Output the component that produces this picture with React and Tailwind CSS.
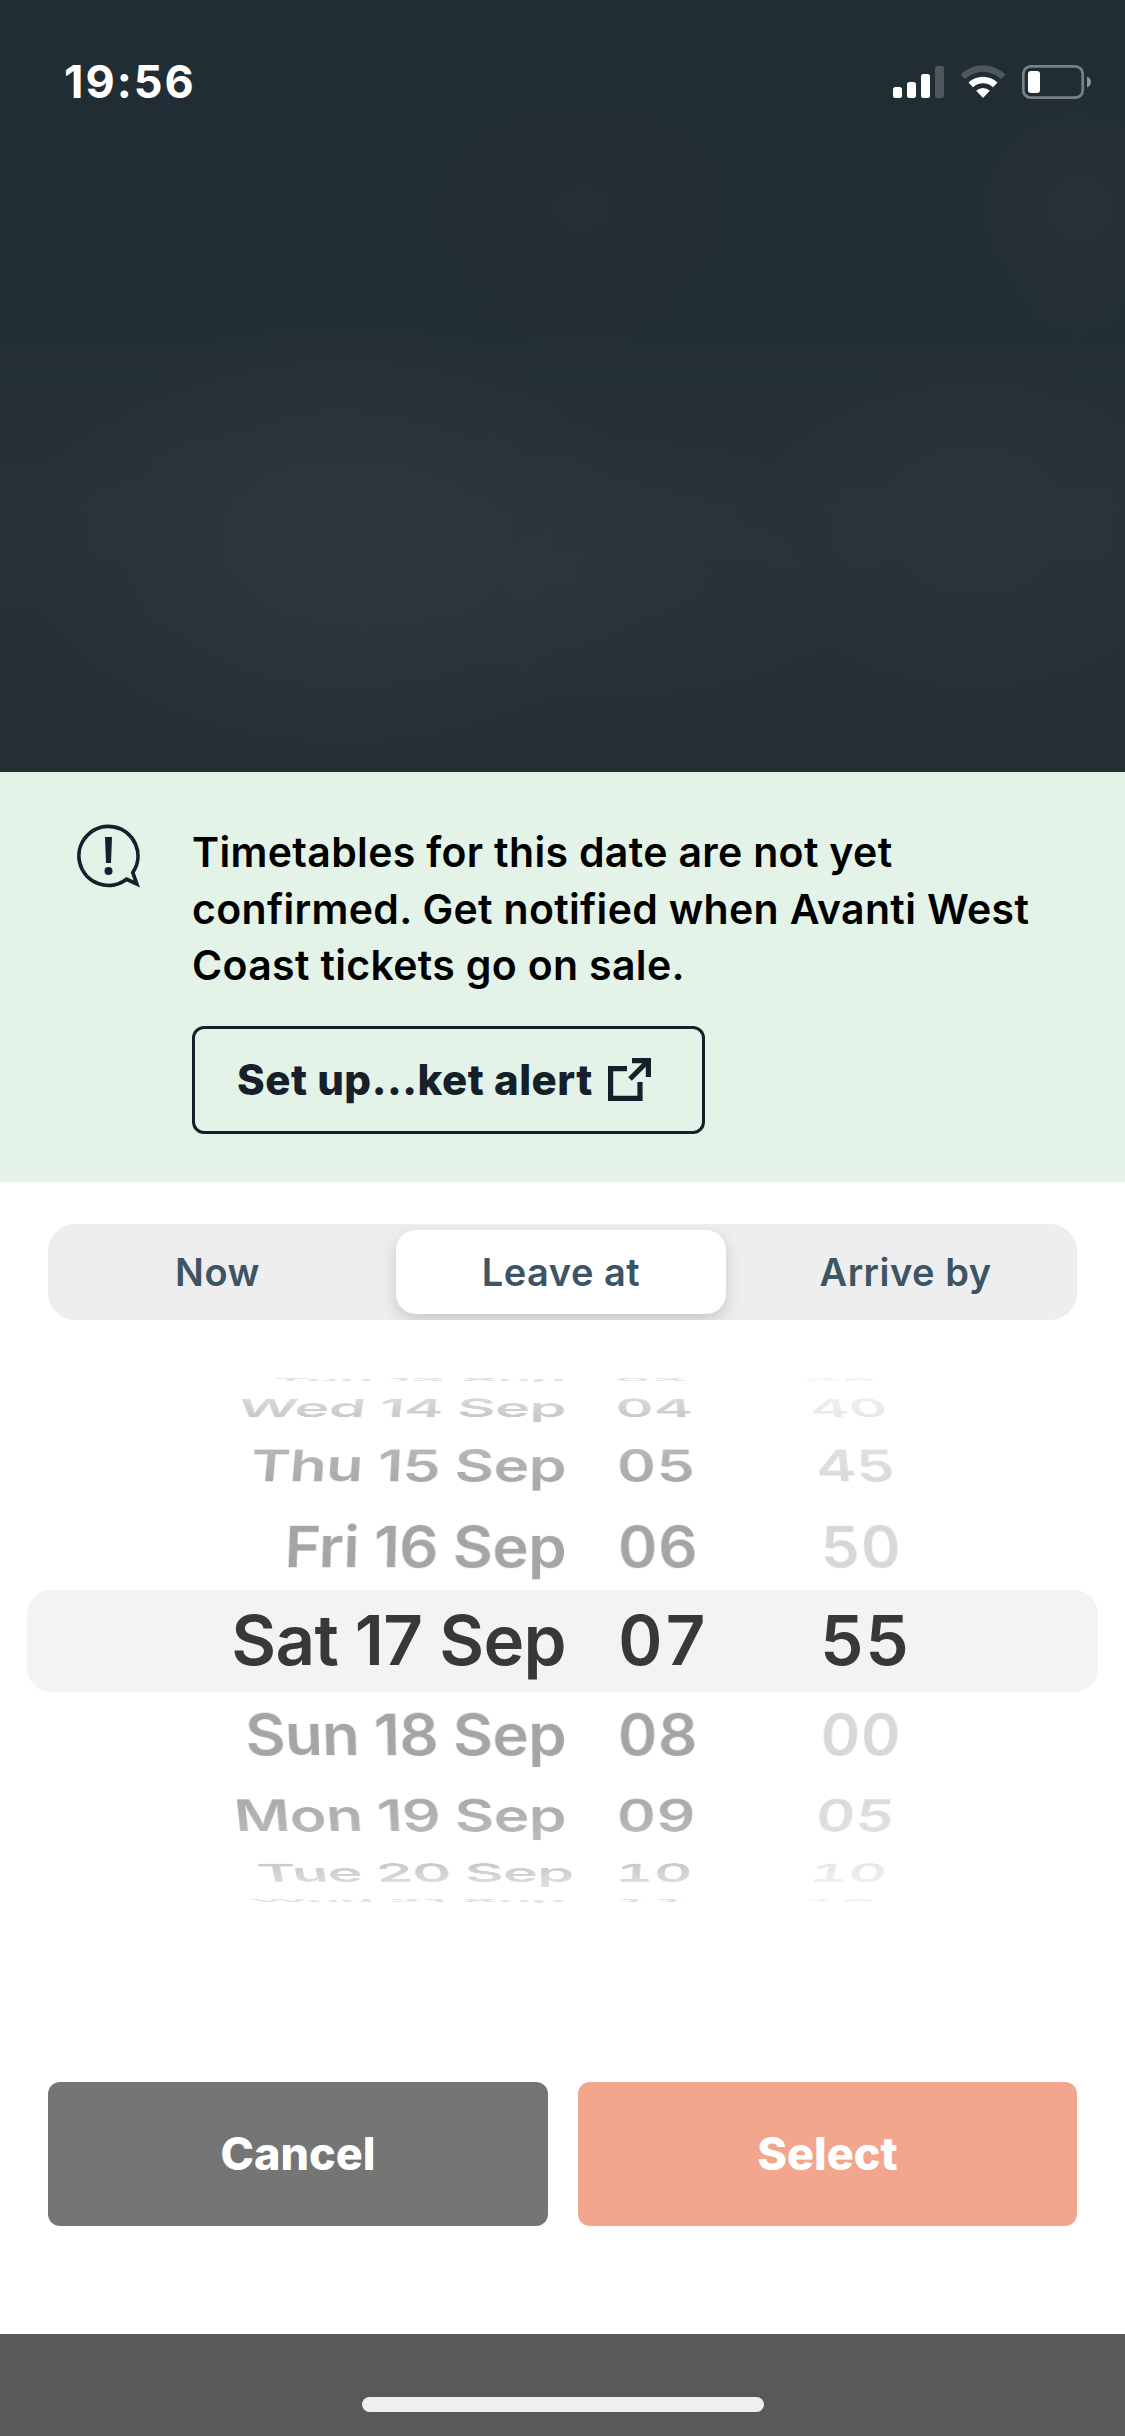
const DATES = ["Tue 13 Sep", "Wed 14 Sep", "Thu 15 Sep", "Fri 16 Sep", "Sat 17 Sep", "Sun 18 Sep", "Mon 19 Sep", "Tue 20 Sep", "Wed 21 Sep"];
const HOURS = ["03", "04", "05", "06", "07", "08", "09", "10", "11"];
const MINUTES = ["35", "40", "45", "50", "55", "00", "05", "10", "15"];

const STEP = 20.2;
const RADIUS = 265;
const PERSPECTIVE = 2800;
// distance of each row from the selected one
const ROW_Y = [0, 94, 175, 232.5, 260.5];

// places one row on the drum, offset 0 is the selected row
const rowTransform = (offset) => {
      const angle = (offset * STEP * Math.PI) / 180;
      const depth = RADIUS * (1 - Math.cos(angle));
      const y = Math.sign(offset) * ROW_Y[Math.abs(offset)] * ((PERSPECTIVE + depth) / PERSPECTIVE);
      return `translate3d(0, ${y}px, ${-depth}px) rotateX(${-offset * STEP}deg)`;
};

const StatusBar = () => (
      <div className="flex items-center justify-between pt-[58px] pl-[64px] pr-[33px] text-white">
            <span className="text-[45px] leading-[48px] font-bold tracking-[2px]">19:56</span>
            <svg width="200" height="36" viewBox="892 64 200 36" fill="white">
                  <rect x="893" y="87" width="9" height="11" rx="2.5" />
                  <rect x="907" y="82" width="9" height="16" rx="2.5" />
                  <rect x="921" y="74" width="9" height="24" rx="2.5" />
                  <rect x="935" y="66" width="9" height="32" rx="2.5" opacity="0.2" />
                  <path d="M960.5 74.5 A32 32 0 0 1 1005.500 74.500 L1001 79 A26 26 0 0 0 965 79 Z" opacity="0.2" />
                  <path d="M968.500 82.500 A21 21 0 0 1 997.500 82.500 L993 87.200 A14.500 14.500 0 0 0 973 87.200 Z" />
                  <path d="M976.200 90.700 A10 10 0 0 1 989.800 90.700 L983 98 Z" />
                  <rect x="1023.300" y="66.300" width="59.400" height="31.400" rx="7.500" fill="none" stroke="white" strokeWidth="2.700" opacity="0.4" />
                  <rect x="1028" y="71" width="12" height="22" rx="3" />
                  <path d="M1087 76.500 Q1091 78.500 1091 82 Q1091 85.500 1087 87.500 Z" opacity="0.5" />
            </svg>
      </div>
);

const AlertIcon = () => (
      <svg className="shrink-0 mt-[52px]" width="64" height="64" viewBox="0 0 64 64" fill="#16202b">
            <path
                  d="M49.500 55.200 A29.500 29.500 0 1 1 55.800 48.500 L59.800 60 Z"
                  fill="none"
                  stroke="#16202b"
                  strokeWidth="3.700" />
            <path d="M28 13 H35 L34 39 H29 Z" />
            <circle cx="31.500" cy="47" r="4" />
      </svg>
);

const ExternalIcon = () => (
      <svg width="43" height="43" viewBox="0 0 43 43" fill="none" stroke="#16202b" strokeWidth="5.200">
            <path d="M19 10.600 H2.600 V40.400 H32 V24" />
            <path d="M24 2.600 H40.400 V19" />
            <path d="M39 4 L22 21" />
      </svg>
);

const Notice = () => (
      <section className="flex h-[410px] bg-[#e3f3e7] pl-[77px]">
            <AlertIcon />
            <div className="ml-[51px] pt-[52px]">
                  <p className="text-[41px] leading-[56.5px] font-semibold tracking-[0.33px] text-black whitespace-nowrap">
                        Timetables for this date are not yet<br />
                        confirmed. Get notified when Avanti West<br />
                        Coast tickets go on sale.
                  </p>
                  <button className="mt-[32px] flex h-[108px] w-[513px] items-center justify-between rounded-xl border-3 border-[#16202b] pl-[42px] pr-[51px] text-[42px] font-extrabold tracking-[0.5px] text-[#16202b] whitespace-nowrap">
                        <span>Set up...ket alert</span>
                        <ExternalIcon />
                  </button>
            </div>
      </section>
);

const Tabs = () => (
      <div className="mx-12 mt-[42px] grid h-24 grid-cols-[348px_330px_351px] items-center overflow-hidden rounded-[27px] bg-[#eeeeee] text-[38px] font-semibold tracking-[0.5px] text-[#3c5564]">
            <button className="pr-[9px]">Now</button>
            <button className="h-[84px] rounded-[20px] bg-white shadow-[0_6px_16px_rgba(0,0,0,0.16)]">Leave at</button>
            <button className="pl-[8px]">Arrive by</button>
      </div>
);

const WheelRow = ({ index }) => {
      const offset = index - 4;
      const selected = offset === 0;
      return (
            <div
                  className={`col-start-1 row-start-1 grid h-[102px] grid-cols-[566px_254px_305px] items-center font-semibold whitespace-nowrap ${selected ? "text-[69px] text-[#383838]" : "text-[62px] text-[#a5a5a5]"}`}
                  style={{ transform: rowTransform(offset) }}>
                  <span className={`text-right tracking-[-0.65px] ${index === 7 ? "-mr-2" : ""}`}>{DATES[index]}</span>
                  <span className="pl-[52px] tabular-nums tracking-[0.5px]">{HOURS[index]}</span>
                  <span className={`tabular-nums tracking-[0.5px] ${selected ? "" : "pl-[2px] text-[#d8d8d8]"}`}>{MINUTES[index]}</span>
            </div>
      );
};

const Picker = () => (
      <div className="mt-[55px] grid h-[530px] items-center">
            <div className="col-start-1 row-start-1 mx-[27px] mt-[2px] h-[102px] rounded-3xl bg-[#f3f3f3]" />
            <div className="col-start-1 row-start-1 h-[530px] overflow-hidden [mask-image:linear-gradient(to_bottom,rgba(0,0,0,.3),rgba(0,0,0,.4)_22px,rgba(0,0,0,.62)_43px,rgba(0,0,0,.8)_74px,rgba(0,0,0,.95)_107px,black_150px,black_380px,rgba(0,0,0,.95)_423px,rgba(0,0,0,.8)_456px,rgba(0,0,0,.62)_487px,rgba(0,0,0,.4)_508px,rgba(0,0,0,.3))]">
                  <div className="grid h-[530px] content-center perspective-[2800px]">
                        {DATES.map((date, i) => (
                              <WheelRow key={date} index={i} />
                        ))}
                  </div>
            </div>
      </div>
);

const App = () => {
      return (
            <main className="flex h-[2436px] w-[1125px] flex-col overflow-hidden bg-white font-['Inter','Liberation_Sans',sans-serif]">
                  <header className="h-[772px] bg-[#212d35] bg-[radial-gradient(ellipse_320px_220px_at_345px_540px,#30363e_0%,#2f353ccc_35%,transparent_100%),radial-gradient(ellipse_300px_140px_at_590px_570px,#2e343bdd_0%,transparent_100%),radial-gradient(ellipse_220px_180px_at_975px_520px,#2f343bdd_0%,transparent_100%),radial-gradient(circle_130px_at_1080px_210px,#283237_0%,transparent_100%),radial-gradient(ellipse_190px_140px_at_580px_210px,#252e33_0%,transparent_100%),linear-gradient(to_bottom,transparent_35%,#273237_65%,#253035_100%)]">
                        <StatusBar />
                  </header>
                  <Notice />
                  <Tabs />
                  <Picker />
                  <div className="mt-[177px] grid h-36 grid-cols-[500px_499px] gap-[30px] px-12 text-[45px] font-extrabold text-white">
                        <button className="rounded-xl bg-[#757575]">Cancel</button>
                        <button className="rounded-xl bg-[#f2a68e]">Select</button>
                  </div>
                  <footer className="mt-[108px] flex flex-1 justify-center bg-[#595959] pt-[63px]">
                        <div className="h-[15px] w-[402px] rounded-full bg-[#efefef]" />
                  </footer>
            </main>
      );
};

export default App;
